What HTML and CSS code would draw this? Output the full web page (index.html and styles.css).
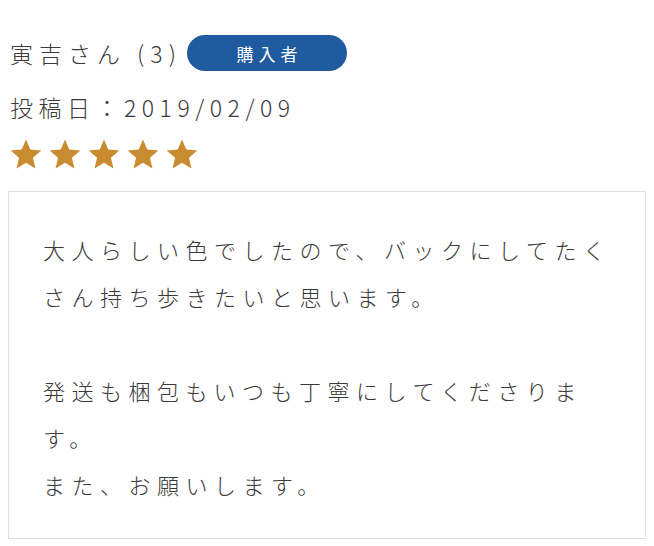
FILE: index.html
```html
<html>
<head>
  <link rel="stylesheet" href="styles.css">
</head>
<body>
  <div class="review">
    <div class="review_head">
      <p class="review_name">寅吉さん (3)</p>
      <span class="review_badge">購入者</span>
    </div>
    <p class="review_date">投稿日：2019/02/09</p>
    <div class="review_stars">
      <svg viewBox="0 0 24 24"><path d="M12 1.2l3.2 7.5 8.3.7-6.3 5.4 1.9 8.1L12 18.6l-7.1 4.3 1.9-8.1L.5 9.4l8.3-.7z"/></svg>
      <svg viewBox="0 0 24 24"><path d="M12 1.2l3.2 7.5 8.3.7-6.3 5.4 1.9 8.1L12 18.6l-7.1 4.3 1.9-8.1L.5 9.4l8.3-.7z"/></svg>
      <svg viewBox="0 0 24 24"><path d="M12 1.2l3.2 7.5 8.3.7-6.3 5.4 1.9 8.1L12 18.6l-7.1 4.3 1.9-8.1L.5 9.4l8.3-.7z"/></svg>
      <svg viewBox="0 0 24 24"><path d="M12 1.2l3.2 7.5 8.3.7-6.3 5.4 1.9 8.1L12 18.6l-7.1 4.3 1.9-8.1L.5 9.4l8.3-.7z"/></svg>
      <svg viewBox="0 0 24 24"><path d="M12 1.2l3.2 7.5 8.3.7-6.3 5.4 1.9 8.1L12 18.6l-7.1 4.3 1.9-8.1L.5 9.4l8.3-.7z"/></svg>
    </div>
    <div class="review_body">
      <p>大人らしい色でしたので、バックにしてたくさん持ち歩きたいと思います。</p>
      <p>発送も梱包もいつも丁寧にしてくださります。<br>また、お願いします。</p>
    </div>
  </div>
</body>
</html>
```

FILE: styles.css
```css
body {
  margin: 0;
  background: #fff;
  color: #3a3a3a;
  font-family: "Noto Sans CJK JP", "Noto Sans", sans-serif;
  font-weight: 300;
}
.review {
  padding: 34px 8px 8px 8px;
}
.review_head {
  display: flex;
  align-items: center;
  padding-left: 2px;
}
.review_name {
  margin: 0;
  font-size: 23px;
  letter-spacing: 6px;
  line-height: 38px;
}
.review_badge {
  margin-left: 5px;
  width: 160px;
  height: 36px;
  border-radius: 18px;
  background: #1f5b9e;
  color: #fff;
  font-size: 17px;
  font-weight: 400;
  letter-spacing: 5px;
  padding-left: 5px;
  box-sizing: border-box;
  display: flex;
  justify-content: center;
  align-items: center;
}
.review_date {
  margin: 16px 0 0 2px;
  font-size: 23px;
  letter-spacing: 5.5px;
  line-height: 38px;
}
.review_stars {
  display: flex;
  gap: 7px;
  margin: 12px 0 0 2px;
}
.review_stars svg {
  width: 32px;
  height: 32px;
  fill: #c98b2f;
}
.review_body {
  margin-top: 21px;
  border: 1px solid #dedede;
  padding: 34px 20px 30px 34px;
}
.review_body p {
  margin: 0;
  font-size: 22px;
  letter-spacing: 6.5px;
  line-height: 47px;
}
.review_body p + p {
  margin-top: 47px;
}
```
